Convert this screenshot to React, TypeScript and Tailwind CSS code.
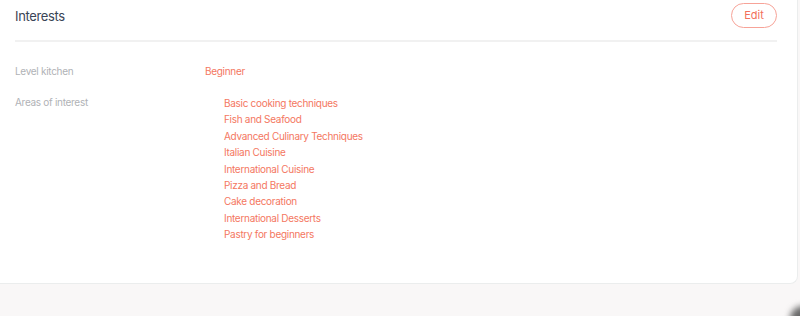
const areas = [
  "Basic cooking techniques",
  "Fish and Seafood",
  "Advanced Culinary Techniques",
  "Italian Cuisine",
  "International Cuisine",
  "Pizza and Bread",
  "Cake decoration",
  "International Desserts",
  "Pastry for beginners",
]

export default function App() {
  return (
    <div
      className="relative h-[316px] w-[800px] overflow-hidden bg-[#f9f7f7]"
      style={{ fontFamily: "Inter, 'Noto Sans', sans-serif" }}
    >
      <div className="h-[284px] w-[798px] rounded-br-[8px] border-r border-b border-[#ebeded] bg-white pr-[20px] pl-[15px]">
        {/* header */}
        <div className="flex h-[42px] items-start justify-between border-b-2 border-[#f1f1f1]">
          <h2 className="pt-[7px] text-[13px] tracking-[-0.35px] text-[#3a4456]">Interests</h2>
          <button className="mt-[3px] flex h-[25px] w-[46px] items-center justify-center rounded-full border border-[#f7a398] text-[11px] text-[#f3705b]">
            Edit
          </button>
        </div>

        <div className="mt-[22px] flex text-[10px] tracking-[-0.3px]">
          <div className="w-[190px] text-[#b0b2b6]">Level kitchen</div>
          <div className="text-[#f47761]">Beginner</div>
        </div>

        <div className="mt-[16px] flex text-[10px] tracking-[-0.3px]">
          <div className="w-[209px] text-[#b0b2b6]">Areas of interest</div>
          <ul className="flex flex-col text-[#f47761]">
            {areas.map((a) => (
              <li key={a} className="h-[16.4px] leading-[16.4px]">
                {a}
              </li>
            ))}
          </ul>
        </div>
      </div>

      {/* dark corner overlay */}
      <div className="absolute right-[-16px] bottom-[-16px] h-[26px] w-[26px] rounded-full bg-[#6a6a6a] blur-[3px]" />
    </div>
  )
}
